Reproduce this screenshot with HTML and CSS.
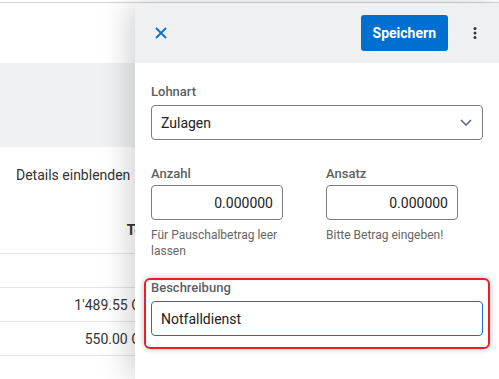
FILE: index.html
```html
<!DOCTYPE html>
<html lang="de">
<head>
    <meta charset="UTF-8">
    <meta name="viewport" content="width=device-width, initial-scale=1.0">
    <title>Lohnart bearbeiten</title>
    <link rel="stylesheet" href="styles.css">
</head>
<body>
    <div class="topline"></div>

    <div class="page">
        <div class="page-head"></div>
        <div class="page-band"></div>

        <div class="details">Details einblenden</div>

        <div class="table">
            <div class="row row-head"><span class="cell">Total</span></div>
            <div class="row"><span class="cell"></span></div>
            <div class="row"><span class="cell">1'489.55 CHF</span></div>
            <div class="row"><span class="cell">550.00 CHF</span></div>
        </div>

        <!-- Side panel -->
        <aside class="panel">
            <div class="panel-head">
                <button class="icon-btn" type="button" aria-label="Schliessen">
                    <svg width="12" height="12" viewBox="0 0 12 12">
                        <path d="M1 1 L11 11 M11 1 L1 11" stroke="#0a6fd0" stroke-width="1.8" fill="none"/>
                    </svg>
                </button>
                <div class="head-actions">
                    <button class="btn-save" type="button">Speichern</button>
                    <svg class="kebab" width="4" height="12" viewBox="0 0 4 12">
                        <circle cx="2" cy="1.6" r="1.5" fill="#333"/>
                        <circle cx="2" cy="6" r="1.5" fill="#333"/>
                        <circle cx="2" cy="10.4" r="1.5" fill="#333"/>
                    </svg>
                </div>
            </div>

            <div class="panel-body">
                <label class="label">Lohnart</label>
                <div class="select">
                    <span>Zulagen</span>
                    <svg width="12" height="7" viewBox="0 0 12 7">
                        <path d="M1 1 L6 6 L11 1" stroke="#56657a" stroke-width="1.5" fill="none"/>
                    </svg>
                </div>

                <div class="pair">
                    <div class="field">
                        <label class="label label-tight">Anzahl</label>
                        <div class="input input-num">0.000000</div>
                        <p class="hint">Für Pauschalbetrag leer lassen</p>
                    </div>
                    <div class="field">
                        <label class="label label-tight">Ansatz</label>
                        <div class="input input-num">0.000000</div>
                        <p class="hint">Bitte Betrag eingeben!</p>
                    </div>
                </div>

                <div class="highlight">
                    <label class="label">Beschreibung</label>
                    <div class="input input-focus">Notfalldienst</div>
                </div>
            </div>
        </aside>
    </div>
</body>
</html>
```

FILE: styles.css
```css
/* General Styles */
body {
    font-family: 'Roboto', 'Liberation Sans', sans-serif;
    margin: 0;
    padding: 0;
    background-color: #fff;
    color: #222;
    font-size: 14px;
    overflow: hidden;
}

.topline {
    height: 2px;
    border-bottom: 1px solid #d6d6d6;
}

.page {
    position: relative;
    height: 376px;
}

.page-head {
    height: 60px;
}

.page-band {
    height: 84px;
    background-color: #f0f1f3;
}

.details {
    height: 59px;
    padding: 18px 0 0 16px;
    box-sizing: border-box;
    line-height: 20px;
    color: #333;
}

.table {
    width: 135px;
    overflow: hidden;
}

.row {
    display: flex;
    align-items: center;
    height: 34px;
    border-bottom: 1px solid #e4e4e4;
    box-sizing: border-box;
    color: #333;
}

.row-head {
    height: 48px;
    font-weight: 700;
}

.cell {
    flex: 0 0 158px;
    text-align: right;
    white-space: nowrap;
}

/* Side panel */
.panel {
    position: absolute;
    top: 0;
    right: 0;
    bottom: 0;
    width: 364px;
    background-color: #fff;
    box-shadow: -6px 0 28px rgba(0, 0, 0, 0.18);
}

.panel-head {
    height: 60px;
    background-color: #eff0f2;
    display: flex;
    align-items: center;
    justify-content: space-between;
    padding: 0 22px 0 20px;
}

.icon-btn {
    border: none;
    background: none;
    padding: 0;
    display: flex;
    cursor: pointer;
}

.head-actions {
    display: flex;
    align-items: center;
    gap: 25px;
}

.btn-save {
    height: 36px;
    padding: 0 12px;
    border: none;
    border-radius: 3px;
    background-color: #006fcf;
    color: #fff;
    font-family: inherit;
    font-size: 14px;
    font-weight: 700;
    cursor: pointer;
}

.panel-body {
    padding: 21px 16px;
}

.label {
    display: block;
    font-size: 13px;
    line-height: 16px;
    font-weight: 500;
    color: #5c5f63;
    margin-bottom: 5px;
}

.label-tight {
    margin-bottom: 3px;
}

.select,
.input {
    height: 35px;
    box-sizing: border-box;
    border: 1px solid #7a7a7a;
    border-radius: 4px;
    display: flex;
    align-items: center;
    padding: 0 9px;
    color: #222;
}

.select {
    justify-content: space-between;
    padding-right: 10px;
}

.pair {
    display: flex;
    gap: 43px;
    margin-top: 26px;
}

.field {
    width: 132px;
}

.input-num {
    justify-content: flex-end;
}

.hint {
    margin: 7px 0 0;
    font-size: 12px;
    line-height: 16px;
    color: #666;
}

.highlight {
    margin: 19px -7px 0;
    padding: 0 5px 11px;
    border: 2px solid #ee1c24;
    border-radius: 6px;
    box-shadow: 0 0 6px rgba(0, 0, 0, 0.25);
}

.input-focus {
    border-color: #1a6fc8;
}
```
